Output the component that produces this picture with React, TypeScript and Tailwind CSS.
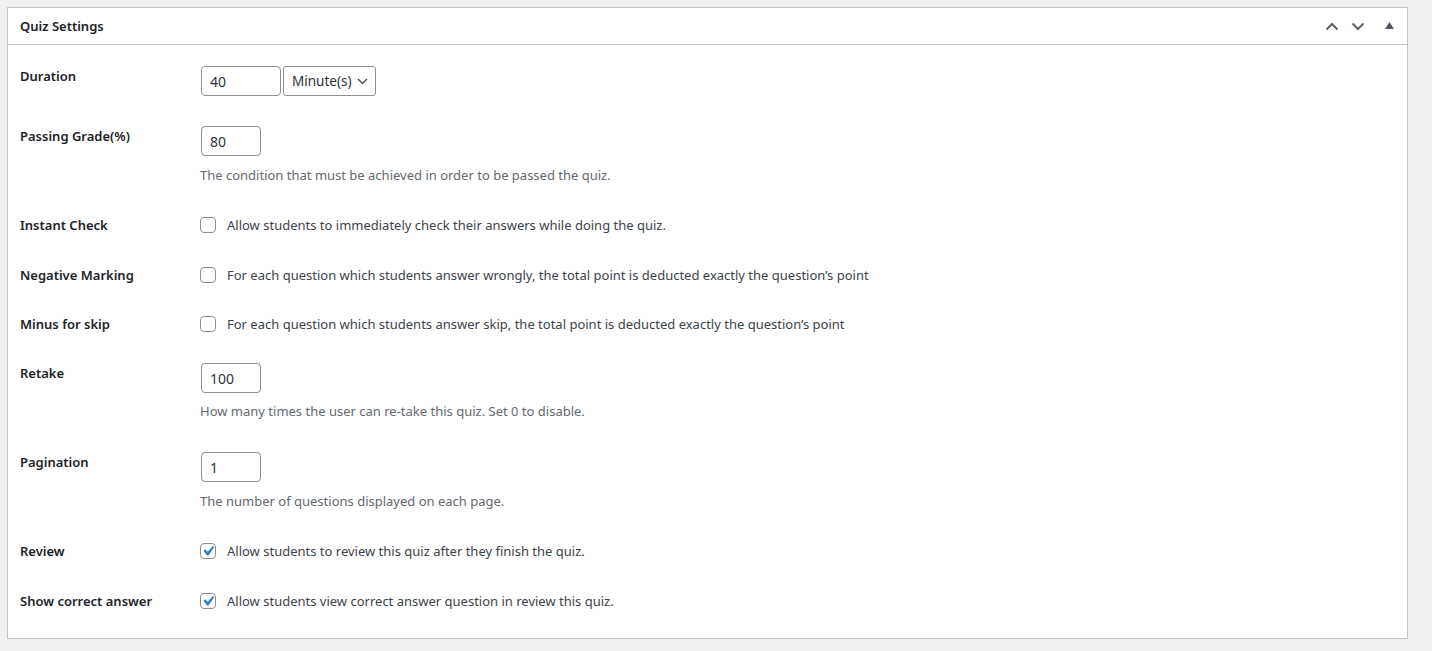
import React from "react";

const font = { fontFamily: '"Noto Sans", "Open Sans", sans-serif' };

function Checkbox({ checked }: { checked?: boolean }) {
  return (
    <span className="relative inline-flex h-4 w-4 shrink-0 items-center justify-center rounded-[4px] border border-[#8c8f94] bg-white">
      {checked && (
        <svg viewBox="0 0 20 20" className="absolute left-[-3px] top-[-3px] h-5 w-5">
          <path d="M14.83 4.89l1.5 1.05-5.9 8.5H8.95L5.6 9.67l1.45-1.35 2.64 2.46z" fill="#2f7fc1" />
        </svg>
      )}
    </span>
  );
}

function TextInput({ value, wide }: { value: string; wide?: boolean }) {
  return (
    <div
      className={`ml-[1px] flex h-[30px] ${wide ? "w-[80px]" : "w-[60px]"} items-center rounded-[4px] border border-[#8c8f94] bg-white px-2 text-[14px] text-[#2c3338]`}
    >
      {value}
    </div>
  );
}

function Label({ children }: { children: React.ReactNode }) {
  return <div className="w-[180px] shrink-0 text-[13px] font-semibold leading-[20px] text-[#1d2327]">{children}</div>;
}

function Desc({ children, mt }: { children: React.ReactNode; mt: string }) {
  return <div className={`${mt} text-[13px] leading-[20px] text-[#646970]`}>{children}</div>;
}

function CheckRow({ label, text, checked, mt }: { label: string; text: string; checked?: boolean; mt: string }) {
  return (
    <div className={`flex ${mt}`}>
      <Label>{label}</Label>
      <div className="flex h-5 items-center gap-[11px] text-[13px] leading-[20px] text-[#3c434a]">
        <Checkbox checked={checked} />
        <span>{text}</span>
      </div>
    </div>
  );
}

export default function App() {
  return (
    <div className="min-h-[651px] bg-[#f0f0f1] pl-[7px] pt-[7px]" style={font}>
      <div className="w-[1401px] border border-[#c3c4c7] bg-white">
        <div className="flex h-[37px] items-center justify-between border-b border-[#c3c4c7]">
          <h2 className="pl-3 text-[13px] font-semibold leading-[20px] text-[#1d2327]">Quiz Settings</h2>
          <div className="flex h-full items-center">
            <div className="flex h-full w-[26px] items-center justify-center">
              <svg width="14" height="9" viewBox="0 0 14 9">
                <path d="M1.5 7.5 L7 2 L12.5 7.5" fill="none" stroke="#5f6369" strokeWidth="2" />
              </svg>
            </div>
            <div className="flex h-full w-[26px] items-center justify-center">
              <svg width="14" height="9" viewBox="0 0 14 9">
                <path d="M1.5 1.5 L7 7 L12.5 1.5" fill="none" stroke="#5f6369" strokeWidth="2" />
              </svg>
            </div>
            <div className="flex h-full w-[36px] items-center justify-center pb-[2px]">
              <svg width="9" height="7" viewBox="0 0 9 7">
                <path d="M4.5 0 L9 7 L0 7 Z" fill="#50575e" />
              </svg>
            </div>
          </div>
        </div>

        <div className="pb-[27px] pl-3 pt-[21px]">
          {/* Duration */}
          <div className="flex">
            <Label>Duration</Label>
            <div className="flex items-center">
              <TextInput value="40" wide />
              <div className="ml-[2px] flex h-[30px] w-[93px] items-center justify-between rounded-[3px] border border-[#8c8f94] bg-white pl-2 pr-[7px] text-[13.5px] text-[#2c3338]">
                <span>Minute(s)</span>
                <svg width="11" height="7" viewBox="0 0 11 7">
                  <path d="M1 1 L5.5 5.5 L10 1" fill="none" stroke="#50575e" strokeWidth="1.5" />
                </svg>
              </div>
            </div>
          </div>

          {/* Passing grade */}
          <div className="mt-[30px] flex">
            <Label>Passing Grade(%)</Label>
            <div>
              <TextInput value="80" />
              <Desc mt="mt-[9px]">The condition that must be achieved in order to be passed the quiz.</Desc>
            </div>
          </div>

          <CheckRow mt="mt-[30px]" label="Instant Check" text="Allow students to immediately check their answers while doing the quiz." />
          <CheckRow
            mt="mt-[30px]"
            label="Negative Marking"
            text="For each question which students answer wrongly, the total point is deducted exactly the question’s point"
          />
          <CheckRow
            mt="mt-[29px]"
            label="Minus for skip"
            text="For each question which students answer skip, the total point is deducted exactly the question’s point"
          />

          {/* Retake */}
          <div className="mt-[29px] flex">
            <Label>Retake</Label>
            <div>
              <TextInput value="100" />
              <Desc mt="mt-[8px]">How many times the user can re-take this quiz. Set 0 to disable.</Desc>
            </div>
          </div>

          {/* Pagination */}
          <div className="mt-[31px] flex">
            <Label>Pagination</Label>
            <div>
              <TextInput value="1" />
              <Desc mt="mt-[9px]">The number of questions displayed on each page.</Desc>
            </div>
          </div>

          <CheckRow mt="mt-[30px]" label="Review" checked text="Allow students to review this quiz after they finish the quiz." />
          <CheckRow mt="mt-[30px]" label="Show correct answer" checked text="Allow students view correct answer question in review this quiz." />
        </div>
      </div>
    </div>
  );
}
